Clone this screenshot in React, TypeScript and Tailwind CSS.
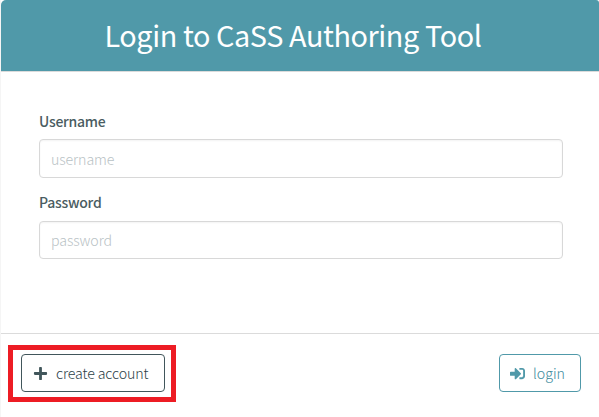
import { FaPlus, FaSignInAlt } from "react-icons/fa";

type FieldProps = { id: string; label: string; placeholder: string; type: string; inputClass: string };

function Field({ id, label, placeholder, type, inputClass }: FieldProps) {
  return (
    <div>
      <label htmlFor={id} className="block h-6 text-[14px] leading-[22px] font-medium tracking-[-0.25px] text-[#4a5c61]">
        {label}
      </label>
      <input
        id={id}
        type={type}
        placeholder={placeholder}
        className={`block w-full rounded-[4px] border border-[#d8d8d8] px-[11px] text-[14.2px] font-light tracking-[-0.1px] text-[#41565b] shadow-[inset_0_1px_2px_rgba(10,10,10,0.05)] placeholder:text-[#b9c2c5] ${inputClass}`}
      />
    </div>
  );
}

export default function App() {
  return (
    <div className="h-[417px] w-[599px] overflow-hidden border-l border-[#f5f5f5] bg-white font-['Noto_Sans_CJK_SC','Open_Sans',sans-serif]">
      <header className="flex h-[72px] items-center justify-center rounded-tl-[5px] rounded-tr-[3px] border-b border-[#dbdbdb] bg-[#5099a9] pr-[14px]">
        <h1 className="-mt-px text-[28.8px] leading-[36px] font-normal tracking-[-0.4px] whitespace-nowrap text-white">Login to CaSS Authoring Tool</h1>
      </header>
      <main className="flex h-[261px] flex-col gap-[13px] pt-[38px] pr-9 pl-[38px]">
        <Field id="username" label="Username" placeholder="username" type="text" inputClass="mt-[5px] h-[39px]" />
        <Field id="password" label="Password" placeholder="password" type="password" inputClass="mt-[6px] h-[38px]" />
      </main>
      <footer className="flex items-start justify-between border-t border-[#dbdbdb] pt-[11px] pr-[18px] pl-[7px]">
        <div className="h-[57px] w-[168px] border-[5px] border-[#ed1c24] pt-1 pl-2">
          <button className="flex h-[38px] w-[144px] items-center rounded-[4px] border border-[#41565b] pl-[11px] text-[14.2px] leading-[22px] font-light tracking-[-0.12px] whitespace-nowrap text-[#2c4147]">
            <FaPlus className="mr-[8px] size-[15px] shrink-0 text-[#41565b]" />
            <span>create account</span>
          </button>
        </div>
        <button className="mt-[9px] flex h-[38px] w-[82px] items-center rounded-[4px] border border-[#5099a9] pl-[10px] text-[14.2px] leading-[22px] font-light whitespace-nowrap text-[#418c9d]">
          <FaSignInAlt className="mr-[8px] size-[15px] shrink-0 text-[#5099a9]" />
          <span>login</span>
        </button>
      </footer>
    </div>
  );
}
